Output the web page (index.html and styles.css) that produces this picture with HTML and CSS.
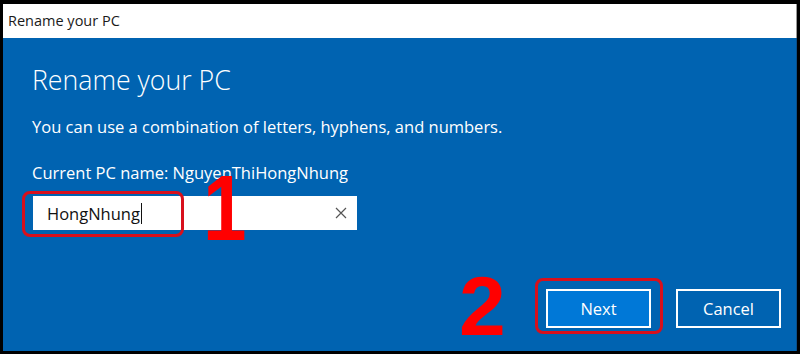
FILE: index.html
```html
<!DOCTYPE html>
<html>
<head>
<meta charset="utf-8">
<link rel="stylesheet" href="styles.css">
</head>
<body>
<div class="frame">
  <div class="window">
    <div class="titlebar">Rename your PC</div>
    <div class="content">
      <h1 class="heading">Rename your PC</h1>
      <p class="hint">You can use a combination of letters, hyphens, and numbers.</p>
      <p class="current">Current PC name: NguyenThiHongNhung</p>
      <div class="field">
        <span class="value">HongNhung<span class="caret"></span></span>
        <svg class="clear" width="12" height="12" viewBox="0 0 12 12"><path d="M1 1L11 11M11 1L1 11" stroke="#555" stroke-width="1.2" fill="none"/></svg>
      </div>
      <div class="actions">
        <button class="btn primary">Next</button>
        <button class="btn">Cancel</button>
      </div>
      <div class="mark mark-field"></div>
      <div class="mark mark-next"></div>
      <div class="num num-1">1</div>
      <div class="num num-2">2</div>
    </div>
  </div>
</div>
</body>
</html>
```
FILE: styles.css
```css
html, body {
  margin: 0;
  padding: 0;
  background: #000;
}
.frame {
  width: 800px;
  height: 354px;
  box-sizing: border-box;
  padding: 4px 3px 3px 3px;
  background: #000;
}
.window {
  height: 100%;
  display: flex;
  flex-direction: column;
  font-family: "Open Sans", "Noto Sans", sans-serif;
}
.titlebar {
  height: 34px;
  background: #fff;
  border-right: 1px solid #999;
  color: #1a1a1a;
  font-size: 14.5px;
  line-height: 34px;
  padding-left: 5px;
}
.content {
  flex: 1;
  position: relative;
  background: #0063b1;
  color: #fff;
  padding: 0 0 0 29px;
  border-right: 1px solid #0a4f8a;
}
.heading {
  margin: 24px 0 0 0;
  font-weight: 300;
  font-size: 26.7px;
  line-height: 36px;
}
.hint {
  margin: 17px 0 0 0;
  font-size: 16.5px;
  line-height: 24px;
}
.current {
  margin: 22px 0 0 0;
  font-size: 16.5px;
  line-height: 24px;
}
.field {
  margin-top: 11px;
  margin-left: 1px;
  width: 324px;
  height: 34px;
  background: #fff;
  box-sizing: border-box;
  display: flex;
  align-items: center;
  justify-content: space-between;
  padding: 0 10px 0 14px;
}
.value {
  color: #111;
  font-size: 16.5px;
  display: flex;
  align-items: center;
}
.caret {
  display: inline-block;
  width: 1px;
  height: 21px;
  background: #111;
  margin-left: 1px;
}
.actions {
  position: absolute;
  right: 15px;
  bottom: 23px;
  display: flex;
  gap: 25px;
}
.btn {
  width: 105px;
  height: 39px;
  box-sizing: border-box;
  border: 2px solid #fff;
  background: #0063b1;
  color: #fff;
  font-family: "Open Sans", "Noto Sans", sans-serif;
  font-size: 16.5px;
  padding: 0;
}
.btn.primary {
  background: #0078d7;
}
.mark {
  position: absolute;
  border: 3px solid #d8101c;
  border-radius: 8px;
  box-sizing: border-box;
}
.mark-field {
  left: 19px;
  top: 153px;
  width: 162px;
  height: 46px;
}
.mark-next {
  left: 532px;
  top: 240px;
  width: 128px;
  height: 56px;
}
.num {
  position: absolute;
  color: #f00;
  font-family: "Liberation Sans", Arial, sans-serif;
  font-weight: bold;
  line-height: 1;
}
.num-1 {
  left: 200px;
  top: 124px;
  font-size: 92px;
  transform: scaleX(0.85);
  transform-origin: left top;
}
.num-2 {
  left: 456px;
  top: 226px;
  font-size: 84px;
}
```
